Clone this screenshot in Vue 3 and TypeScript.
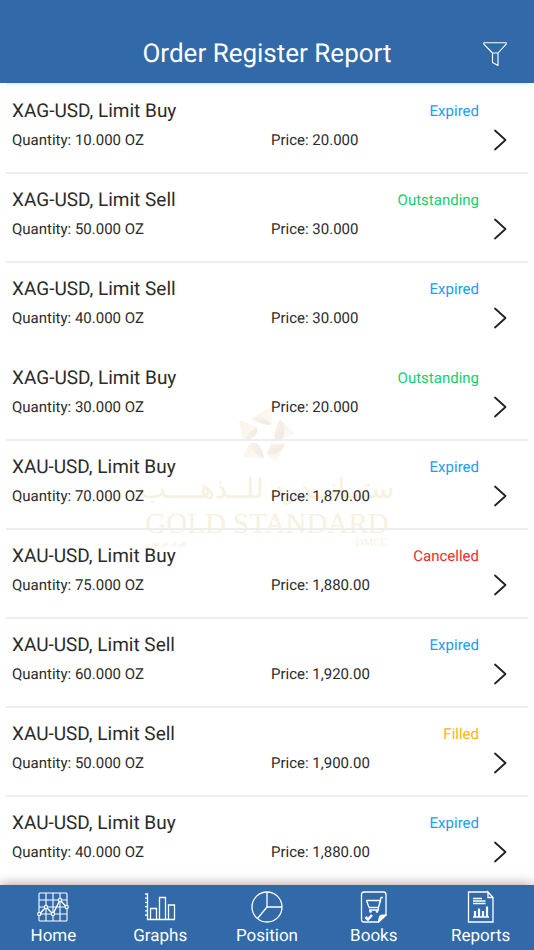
<script setup lang="ts">
type Status = 'Expired' | 'Outstanding' | 'Cancelled' | 'Filled'

interface Order {
  symbol: string
  type: string
  quantity: string
  price: string
  status: Status
}

const orders: Order[] = [
  { symbol: 'XAG-USD', type: 'Limit Buy', quantity: '10.000', price: '20.000', status: 'Expired' },
  { symbol: 'XAG-USD', type: 'Limit Sell', quantity: '50.000', price: '30.000', status: 'Outstanding' },
  { symbol: 'XAG-USD', type: 'Limit Sell', quantity: '40.000', price: '30.000', status: 'Expired' },
  { symbol: 'XAG-USD', type: 'Limit Buy', quantity: '30.000', price: '20.000', status: 'Outstanding' },
  { symbol: 'XAU-USD', type: 'Limit Buy', quantity: '70.000', price: '1,870.00', status: 'Expired' },
  { symbol: 'XAU-USD', type: 'Limit Buy', quantity: '75.000', price: '1,880.00', status: 'Cancelled' },
  { symbol: 'XAU-USD', type: 'Limit Sell', quantity: '60.000', price: '1,920.00', status: 'Expired' },
  { symbol: 'XAU-USD', type: 'Limit Sell', quantity: '50.000', price: '1,900.00', status: 'Filled' },
  { symbol: 'XAU-USD', type: 'Limit Buy', quantity: '40.000', price: '1,880.00', status: 'Expired' },
]
</script>

<template>
  <div class="screen">
    <header class="top">
      <h1>Order Register Report</h1>
      <button class="filter" type="button" aria-label="Filter orders">
        <svg width="26" height="26" viewBox="0 0 26 26" fill="none" stroke="#fff" stroke-width="1.1" stroke-linejoin="round">
          <path d="M1.8 1.8H24.2V3.2L16 12H10.5L1.8 3.2ZM10.5 12H16V24.5L10.5 21.5Z" />
        </svg>
      </button>
    </header>

    <main class="content">
      <div class="watermark" aria-hidden="true">
        <svg class="mark" width="60" height="56" viewBox="0 0 60 56">
          <defs>
            <linearGradient id="petal" x1="0" y1="0" x2="1" y2="1">
              <stop offset="0" stop-color="#faf3e9" />
              <stop offset="1" stop-color="#fdf9f3" />
            </linearGradient>
            <linearGradient id="fold" x1="0" y1="0" x2="1" y2="1">
              <stop offset="0" stop-color="#f9f3ea" />
              <stop offset="1" stop-color="#f0e8e2" />
            </linearGradient>
          </defs>
          <g fill="url(#petal)">
            <path d="M14 14L35 1V20Z" />
            <path d="M2 15L20 22L18 31L7 37Z" />
            <path d="M43 14L58 29L37 37Z" />
            <path d="M13 38H20L27 54L6 52Z" />
            <path d="M30 49L34 38L48 39L40 57Z" />
          </g>
          <g fill="url(#fold)">
            <path d="M15 14Q28 9 34 20Q24 20 15 14Z" />
            <path d="M20 22Q22 32 8 36Q11 26 20 22Z" />
            <path d="M43 14Q50 24 46 33L37 36Q37 24 43 14Z" />
            <path d="M13 38H20Q25 42 27 53Q16 50 13 38Z" />
            <path d="M30 49Q32 42 37 40L48 39Q44 51 30 49Z" />
          </g>
        </svg>
        <p class="arabic" dir="rtl" lang="ar">ستــانــدرد للــذهــــب</p>
        <p class="latin">GOLD STANDARD</p>
        <p class="sub"><span dir="rtl" lang="ar">م.د.م.س</span><span>DMCC</span></p>
      </div>

      <ul class="orders">
        <li v-for="(order, index) in orders" :key="index">
          <a class="order" href="#">
            <span class="name">{{ order.symbol }}, {{ order.type }}</span>
            <span class="status" :class="order.status.toLowerCase()">{{ order.status }}</span>
            <span class="quantity">Quantity: {{ order.quantity }} OZ</span>
            <span class="price">Price: {{ order.price }}</span>
            <svg class="chevron" width="14" height="22" viewBox="0 0 14 22" fill="none" stroke="#222" stroke-width="1.8" stroke-linecap="round" stroke-linejoin="round">
              <path d="M2 1.5L12.5 11L2 20.5" />
            </svg>
          </a>
        </li>
      </ul>
    </main>

    <nav class="tabs" aria-label="Main">
      <a href="#">
        <svg width="34" height="34" viewBox="0 0 34 34" fill="none" stroke="#fff" stroke-width="1.1">
          <rect x="3" y="3" width="28" height="28" rx="1" />
          <path d="M10 3V31M17 3V31M24 3V31M3 10H31M3 17H31M3 24H31" />
          <path d="M3.5 24L10 17L17 24L24 10L30.5 17" stroke-width="1.4" />
          <g fill="#3169a9" stroke-width="1.2">
            <circle cx="3.3" cy="24" r="1.6" /><circle cx="10" cy="17" r="1.6" /><circle cx="17" cy="24" r="1.6" /><circle cx="24" cy="10" r="1.6" /><circle cx="30.7" cy="17" r="1.6" />
          </g>
        </svg>
        <span>Home</span>
      </a>
      <a href="#">
        <svg width="34" height="34" viewBox="0 0 34 34" fill="none" stroke="#fff" stroke-width="1.3">
          <path d="M2 4H4.5V29.5H32M2 8.2H4.5M2 12.4H4.5M2 16.6H4.5M2 20.8H4.5M2 25H4.5M7.5 29.5V18.5H13.5V29.5M16.5 29.5V7.5H22.5V29.5M25.5 29.5V15H31.5V29.5" />
        </svg>
        <span>Graphs</span>
      </a>
      <a href="#">
        <svg width="34" height="34" viewBox="0 0 34 34" fill="none" stroke="#fff" stroke-width="1.3">
          <circle cx="17" cy="17" r="15" />
          <path d="M17 2V17H32M17 17L7.5 28.5" />
        </svg>
        <span>Position</span>
      </a>
      <a href="#">
        <svg width="34" height="34" viewBox="0 0 34 34" fill="none" stroke="#fff" stroke-width="1.3" stroke-linejoin="round">
          <path d="M21.5 32H7Q4.5 32 4.5 29.5V4.5Q4.5 2 7 2H26.5Q29 2 29 4.5V25L21.5 32Z" />
          <path d="M21.5 32L22.5 27Q23 25 29 25Z" fill="#fff" />
          <path d="M9.5 10.5H23.5L21.5 17.5H12L9.5 10.5ZM26 7.5H24L21.5 17.5V20H12" />
          <circle cx="13.5" cy="21.5" r=".7" fill="#fff" /><circle cx="20" cy="21.5" r=".7" fill="#fff" />
          <path d="M8.5 27L11 29.5L15 25" stroke-width="2.6" />
        </svg>
        <span>Books</span>
      </a>
      <a href="#">
        <svg width="34" height="34" viewBox="0 0 34 34" fill="none" stroke="#fff" stroke-width="1.3">
          <path d="M24 2H4.5V32H29V7.5L24 2V7.5H29" />
          <path d="M9 8.5H18M9 11H21.5M9 13.5H21.5M9 27H25" />
          <path d="M11 27V21M15 27V18.5M19 27V21M23 27V16.5" stroke-width="2.2" />
        </svg>
        <span>Reports</span>
      </a>
    </nav>
  </div>
</template>

<style>
body {
  margin: 0;
  background: #fff;
}
</style>

<style scoped>
.screen {
  display: flex;
  flex-direction: column;
  height: 100vh;
  font-family: Roboto, "Noto Sans", sans-serif;
  text-rendering: geometricPrecision;
  color: #2b2b2b;
}

.top {
  display: grid;
  grid-template-columns: 1fr auto 1fr;
  align-items: center;
  flex: none;
  padding: 36px 26px 11px;
  background: #3169a9;
  color: #fff;
}

h1 {
  grid-column: 2;
  margin: 0;
  font-size: 26px;
  font-weight: 400;
  line-height: 36px;
}

.filter {
  justify-self: end;
  width: 26px;
  height: 26px;
  padding: 0;
  border: 0;
  background: none;
}

.filter svg {
  display: block;
}

.content {
  position: relative;
  flex: 1;
  min-height: 0;
  overflow: hidden;
}

.watermark {
  position: absolute;
  top: 322px;
  left: 0;
  right: 0;
  display: flex;
  flex-direction: column;
  align-items: center;
  color: #f7f1df;
}

.watermark p {
  margin: 0;
  white-space: nowrap;
}

.arabic {
  font-family: "DejaVu Sans", sans-serif;
  font-size: 28px;
  line-height: 56px;
}

.latin {
  font-family: "Liberation Serif", serif;
  font-size: 29px;
  line-height: 14px;
}

.sub {
  display: flex;
  justify-content: space-between;
  width: 242px;
  padding-top: 6px;
  font-family: "Liberation Serif", "DejaVu Sans", serif;
  font-size: 11px;
  line-height: 12px;
}

.orders {
  position: relative;
  margin: 0;
  padding: 0 6px;
  list-style: none;
}

.orders li {
  border-top: 2px solid #eee;
}

.orders li:nth-child(4) {
  border-top-color: transparent;
}

.order {
  display: grid;
  grid-template-columns: 259fr 208fr 28px;
  grid-template-rows: 30px 28px;
  align-items: center;
  padding: 11px 21px 18px 6px;
  color: inherit;
  font-size: 15px;
  line-height: 20px;
  text-decoration: none;
}

.name {
  font-size: 19px;
}

.status {
  text-align: right;
}

.quantity {
  grid-column: 1;
}

.chevron {
  justify-self: end;
}

.expired {
  color: #1c9cf2;
}

.outstanding {
  color: #12cf70;
}

.cancelled {
  color: #f02c2c;
}

.filled {
  color: #fbb40f;
}

.tabs {
  position: relative;
  display: grid;
  grid-template-columns: repeat(5, 1fr);
  flex: none;
  padding: 5px 0 2px;
  background: #3169a9;
  box-shadow: 0 0 12px rgba(0, 0, 0, 0.4);
}

.tabs a {
  display: flex;
  flex-direction: column;
  align-items: center;
  color: #fff;
  font-size: 17px;
  line-height: 24px;
  text-decoration: none;
}
</style>
